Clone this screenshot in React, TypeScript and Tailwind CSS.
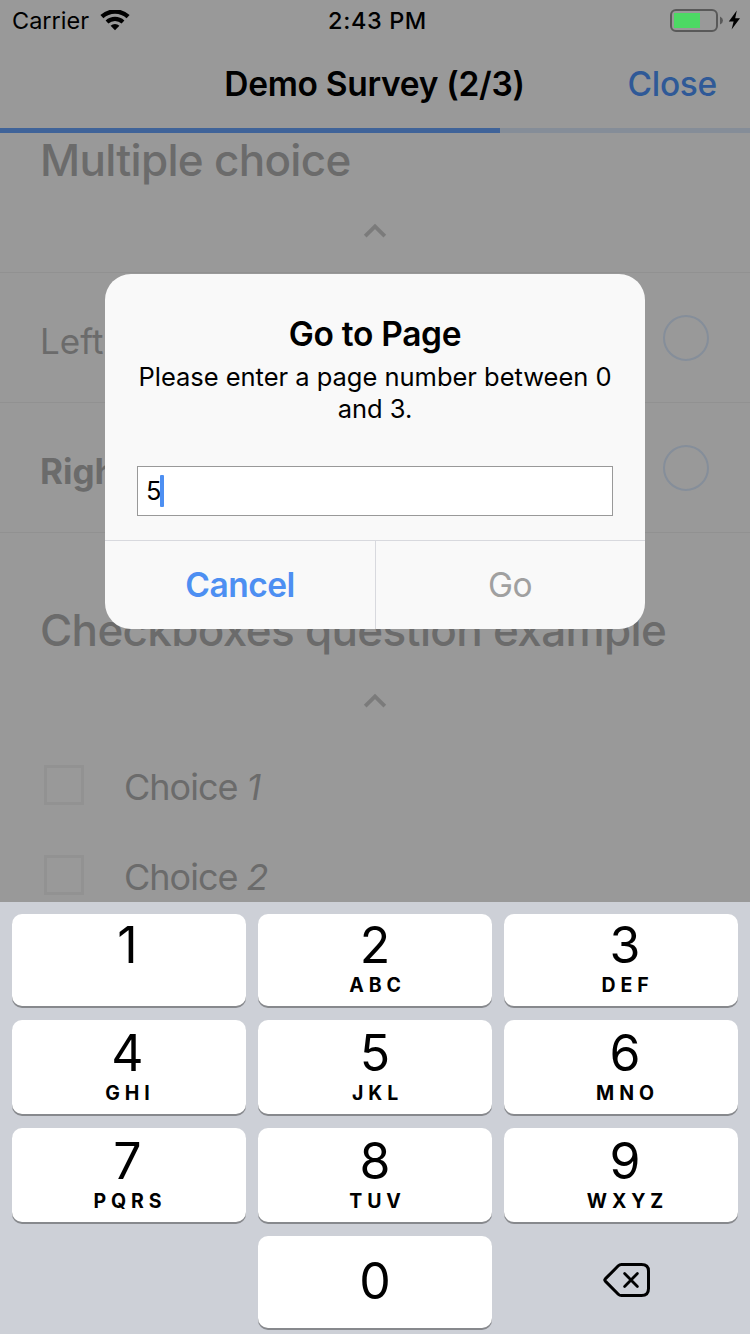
import React from "react";

function WifiIcon() {
  return (
    <svg width="30" height="22" viewBox="0 0 30 22" fill="none" stroke="#000">
      <path d="M1.9 6.7A19.2 19.2 0 0 1 28.1 6.7" strokeWidth="4.4" />
      <path d="M7 12A12 12 0 0 1 23 12" strokeWidth="4.2" />
      <path d="M10.6 15.8A6.6 6.6 0 0 1 19.4 15.8L15 20.3Z" fill="#000" stroke="none" />
    </svg>
  );
}

function BatteryIcon() {
  return (
    <svg width="72" height="26" viewBox="0 0 72 26" fill="none">
      <rect x="1" y="2" width="46" height="21" rx="5" stroke="#595959" strokeWidth="2" />
      <rect x="4" y="5" width="26" height="15" fill="#4cd964" />
      <path d="M50 8.5Q53 10 53 12.5T50 16.5Z" fill="#595959" />
      <path d="M66.8 2.5L58.8 13.6H63.6L61.6 21.5L70 10.3H65.2Z" fill="#000" />
    </svg>
  );
}

function Chevron() {
  return (
    <svg width="24" height="16" viewBox="0 0 24 16" fill="none" stroke="#7b7b7b" strokeWidth="3.8">
      <path d="M2.2 13.2L12 3.4L21.8 13.2" />
    </svg>
  );
}

function BackspaceIcon() {
  return (
    <svg width="48" height="36" viewBox="0 0 48 36" fill="none" stroke="#000" strokeWidth="3" strokeLinejoin="round" strokeLinecap="round">
      <path d="M18.5 2.5H38.5Q45.5 2.5 45.5 9V26.5Q45.5 33.5 38.5 33.5H18.5Q16.6 33.5 15.3 32.2L2.3 19.1Q1.3 18 2.3 16.9L15.3 3.8Q16.6 2.5 18.5 2.5Z" />
      <path d="M21.6 11.6L34.4 24.4M34.4 11.6L21.6 24.4" strokeWidth="2.8" />
    </svg>
  );
}

function RadioRow({ children }: { children: React.ReactNode }) {
  return (
    <div className="flex h-[130px] items-center justify-between border-t border-[#919191] pr-[41px] pl-10 text-[35px]">
      <div className="pt-[7px]">{children}</div>
      <div className="size-[46px] rounded-full border-2 border-[#858e9a]" />
    </div>
  );
}

function CheckRow({ n }: { n: number }) {
  return (
    <div className="flex h-[90px] shrink-0 items-center pl-11">
      <div className="size-10 border-[3px] border-[#929292]" />
      <div className="pt-1 pl-10 text-[36px] tracking-[-1px]">
        Choice <em>{n}</em>
      </div>
    </div>
  );
}

function Key({ digit, letters = "", className }: { digit: string; letters?: string; className: string }) {
  return (
    <button className={`flex flex-col items-center rounded-[10px] bg-white shadow-[0_2px_0_#87898d] ${className}`}>
      <span className="h-[58px] text-[50px] leading-[58px]">{digit}</span>
      <span className="h-[22px] pl-[5px] text-[19.5px] leading-[22px] font-bold tracking-[4.9px]">{letters}</span>
    </button>
  );
}

const keys = [
  ["1", "", "pt-[2px] pr-[3px]"],
  ["2", "ABC", "pt-[2px]"],
  ["3", "DEF", "pt-[2px] pl-[8px]"],
  ["4", "GHI", "pt-1 pr-[3px]"],
  ["5", "JKL", "pt-1"],
  ["6", "MNO", "pt-1 pl-[8px]"],
  ["7", "PQRS", "pt-1 pr-[3px]"],
  ["8", "TUV", "pt-1"],
  ["9", "WXYZ", "pt-1 pl-[8px]"],
];

export default function App() {
  return (
    <div className="relative flex h-[1334px] w-[750px] flex-col overflow-hidden bg-[#999999] font-['Inter',sans-serif] text-black">
      <header className="shrink-0">
        <div className="grid h-[41px] grid-cols-3 items-center pr-2 pl-3 text-[23.5px]">
          <div className="flex items-center gap-[11px]">
            <span>Carrier</span>
            <WifiIcon />
          </div>
          <div className="pl-[1px] text-center font-medium tracking-[0.6px]">2:43 PM</div>
          <div className="flex justify-end">
            <BatteryIcon />
          </div>
        </div>
        <div className="grid h-[87px] grid-cols-[1fr_auto_1fr] items-center pr-[33px] pl-[32px] text-[33.5px]">
          <span />
          <h1 className="font-semibold tracking-[-0.3px]">Demo Survey (2/3)</h1>
          <button className="text-right font-medium tracking-[-0.3px] text-[#2f5997]">Close</button>
        </div>
        <div className="h-[5px] bg-[#858d98]">
          <div className="h-full w-2/3 bg-[#3f6399]" />
        </div>
      </header>

      <main className="flex min-h-0 flex-1 flex-col overflow-hidden text-[#6b6b6b]">
        <section className="shrink-0 border-b border-[#919191]">
          <div className="flex h-[139px] flex-col items-center">
            <h2 className="h-[54px] w-full pl-10 text-[44px] leading-[54px] font-medium tracking-[-0.7px]">Multiple choice</h2>
            <div className="mt-[36px]">
              <Chevron />
            </div>
          </div>
          <RadioRow>Left</RadioRow>
          <RadioRow>
            <b>Right</b>
          </RadioRow>
        </section>
        <section className="flex shrink-0 flex-col">
          <div className="flex h-[207px] flex-col items-center pt-[70px]">
            <h2 className="h-[54px] w-full pl-10 text-[44px] leading-[54px] font-medium tracking-[-0.66px]">Checkboxes question example</h2>
            <div className="mt-[36px]">
              <Chevron />
            </div>
          </div>
          <CheckRow n={1} />
          <CheckRow n={2} />
        </section>
      </main>

      <div className="grid h-[432px] shrink-0 grid-cols-3 grid-rows-[92px_94px_94px_92px] gap-x-3 gap-y-[14px] bg-[#cdd0d7] px-3 pt-3">
        {keys.map(([digit, letters, pad]) => (
          <Key key={digit} digit={digit} letters={letters} className={pad} />
        ))}
        <span />
        <button className="flex items-center justify-center rounded-[10px] bg-white pb-[3px] text-[50px] leading-[58px] shadow-[0_2px_0_#87898d]">
          0
        </button>
        <button className="flex items-center justify-center pb-1 pl-[12px]">
          <BackspaceIcon />
        </button>
      </div>

      <div role="dialog" className="absolute top-[274px] left-[105px] flex h-[355px] w-[540px] flex-col overflow-hidden rounded-[26px] bg-[#f9f9f9]">
        <div className="flex h-[266px] flex-col px-8 pt-10 text-center">
          <h3 className="text-[33.5px] leading-[41px] font-semibold tracking-[-0.3px]">Go to Page</h3>
          <p className="mt-[6px] text-[25.5px] leading-8 tracking-[-0.02px]">
            Please enter a page number between 0
            <br />
            and 3.
          </p>
          <div className="mt-[41px] flex h-[50px] shrink-0 items-center border border-[#999999] bg-white pl-[8px] text-[25.5px]">
            <span className="w-[14px]">5</span>
            <span className="h-8 w-1 rounded-[1px] bg-[#4d8ff2]" />
          </div>
        </div>
        <div className="grid flex-1 grid-cols-2 border-t border-[#d8d9de] text-[33.5px] tracking-[-0.5px]">
          <button className="pt-px font-semibold text-[#4d8ff2]">Cancel</button>
          <button className="border-l border-[#d8d9de] pt-px pr-px text-[#a0a0a0]">Go</button>
        </div>
      </div>
    </div>
  );
}
